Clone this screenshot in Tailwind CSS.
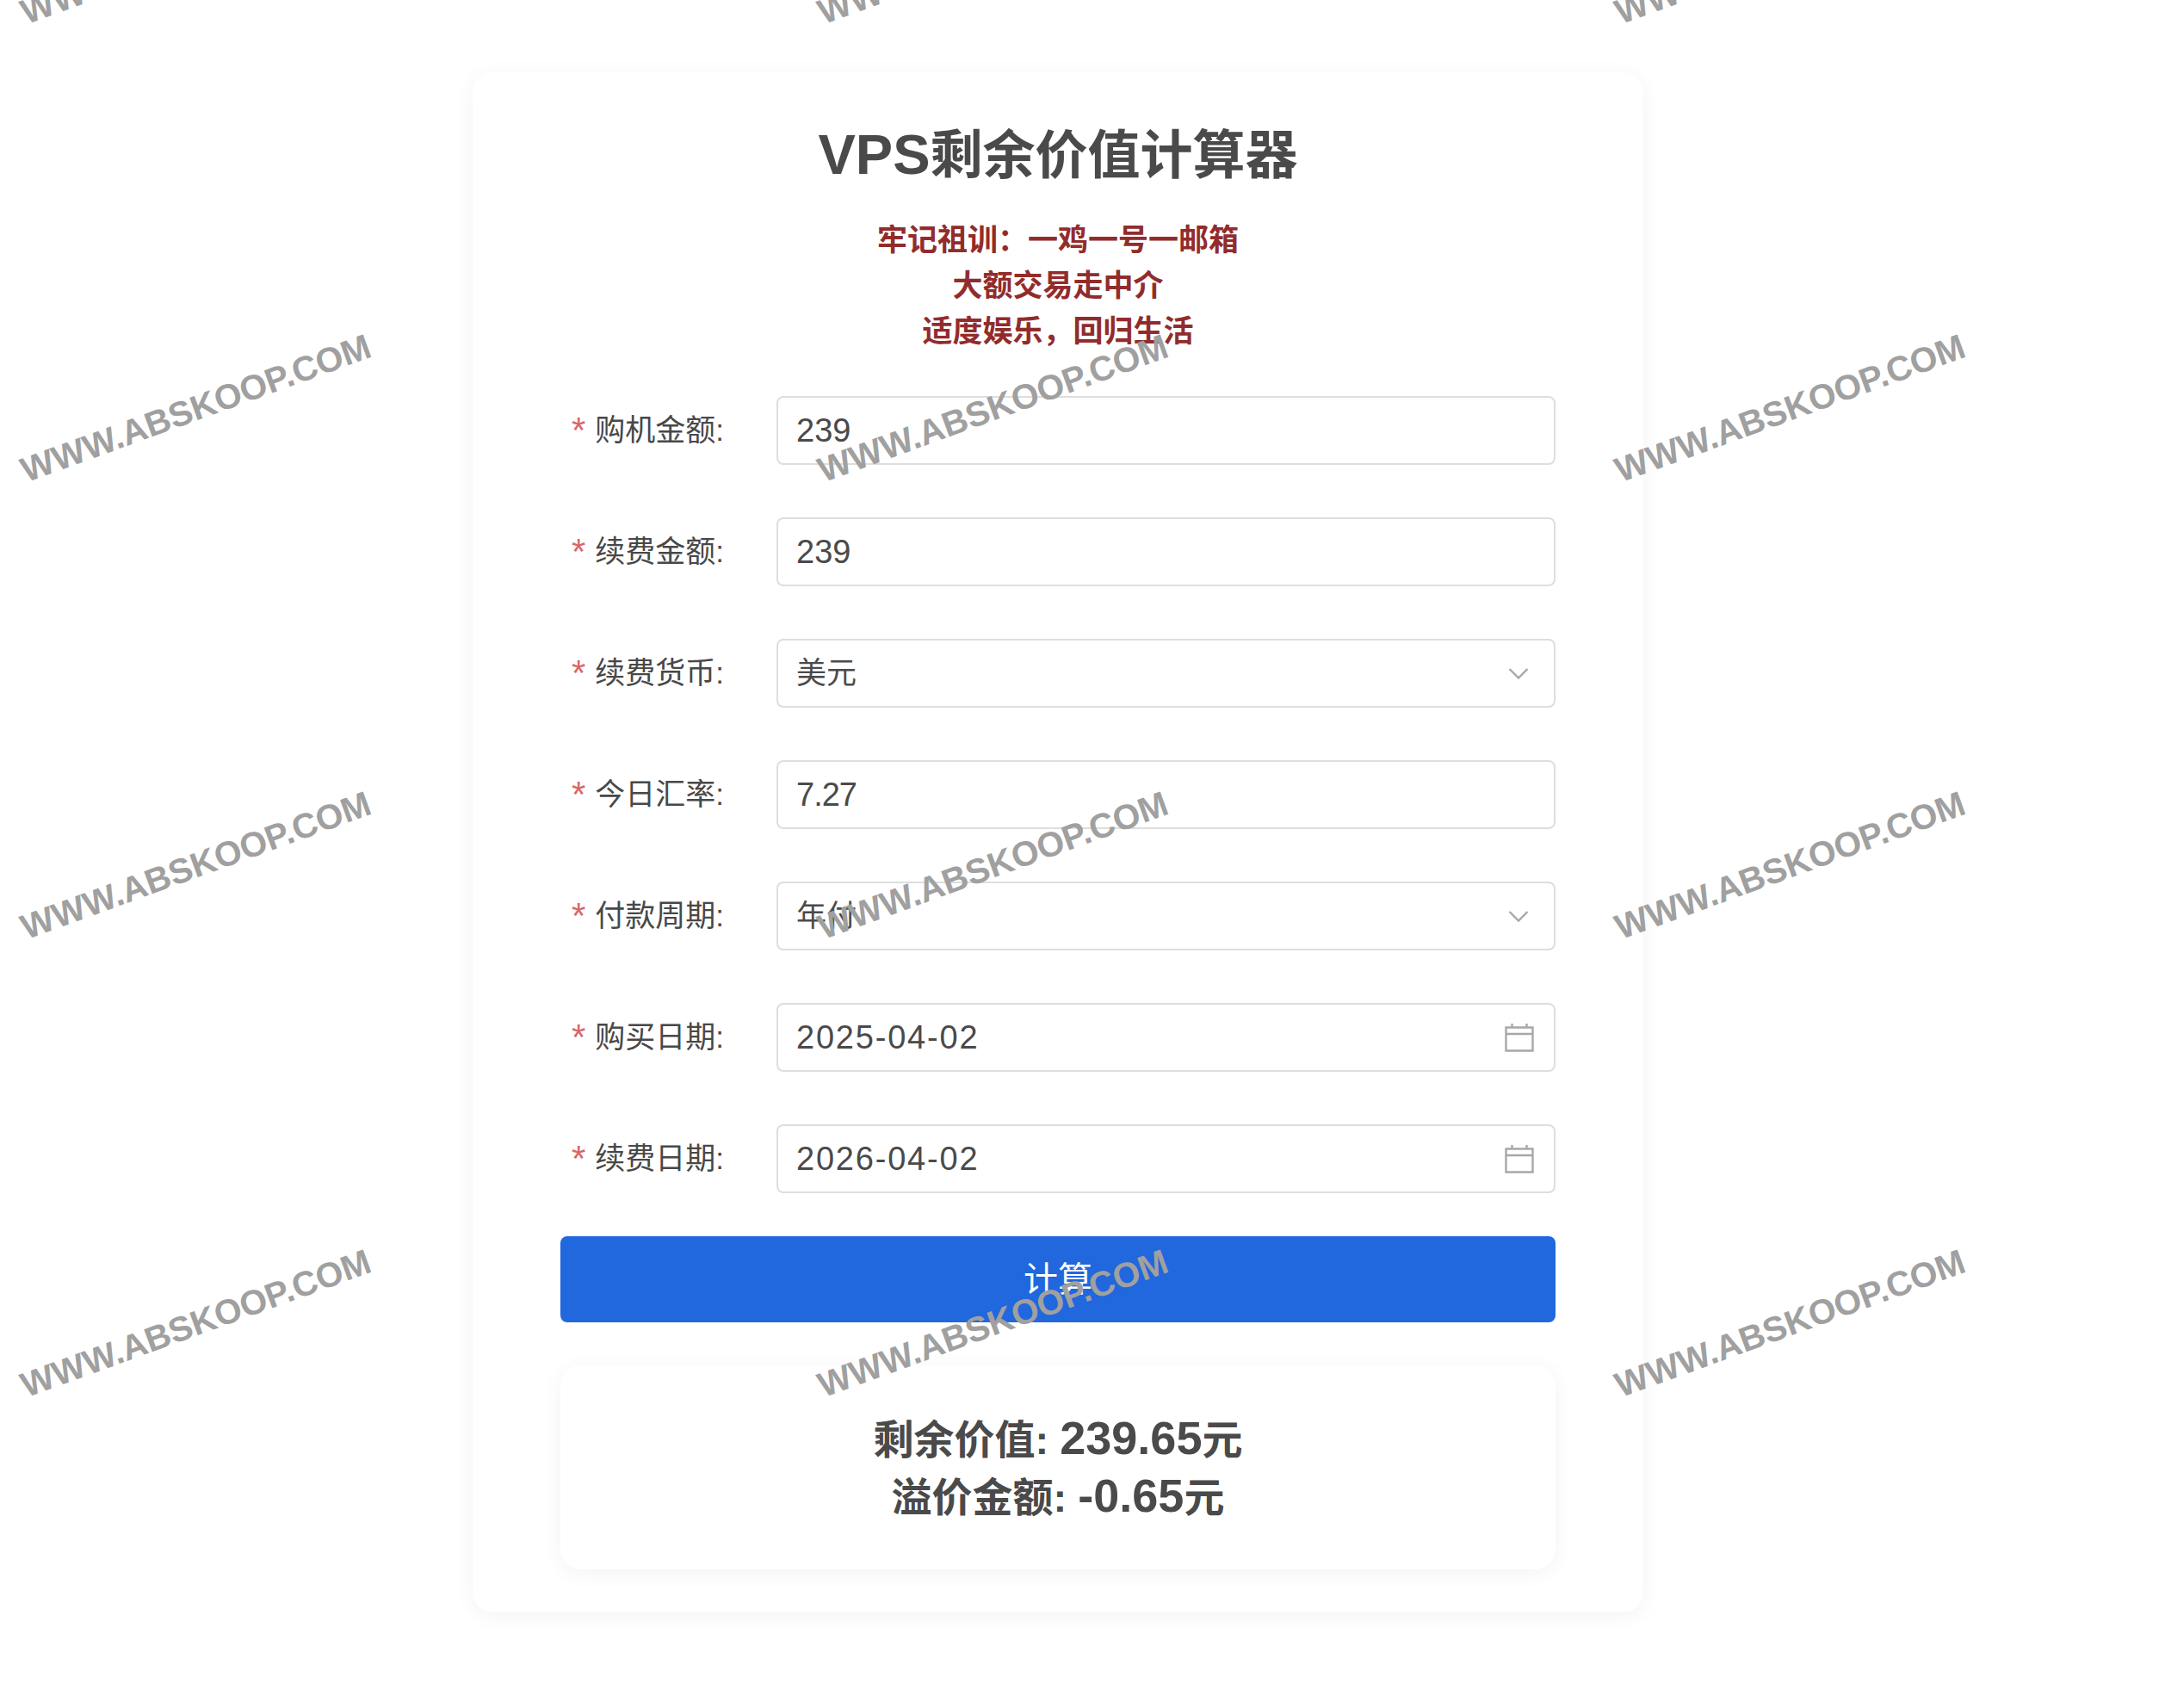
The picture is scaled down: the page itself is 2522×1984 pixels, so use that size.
<!DOCTYPE html>
<html lang="zh-CN">
<head>
    <meta charset="UTF-8">
    <meta name="viewport" content="width=device-width, initial-scale=1.0">
    <title>VPS剩余价值计算器</title>
    <script src="https://cdn.jsdelivr.net/npm/@tailwindcss/browser@4"></script>
</head>
<body class="relative h-[1984px] overflow-hidden bg-white font-['Liberation_Sans','Noto_Sans_CJK_SC',sans-serif] text-[#4a4a4a]">
    <!-- Card -->
    <main class="ml-[549px] mt-[84px] w-[1360px] rounded-[24px] bg-white pl-[102px] pr-[102px] pt-[62px] pb-[50px] shadow-[0_4px_24px_rgba(0,0,0,0.05)]">
        <h1 class="text-center text-[61px] font-bold leading-[68px]"><span class="text-[65px]">VPS</span>剩余价值计算器</h1>
        <div class="mt-[37px] text-center text-[35px] font-bold leading-[53px] text-[#922c2c]">
            <p>牢记祖训：一鸡一号一邮箱</p>
            <p>大额交易走中介</p>
            <p>适度娱乐，回归生活</p>
        </div>

        <!-- Form -->
        <form class="mt-[49px] flex flex-col gap-[61px]">
            <div class="flex items-center">
                <label class="flex w-[251px] shrink-0 items-center pl-[13px] text-[35px] text-[#484848]"><span class="mr-[11px] text-[42px] leading-none text-[#d9676a]">*</span>购机金额:</label>
                <div class="flex h-[80px] flex-1 items-center rounded-[8px] border-2 border-[#dedede] px-[21px] text-[38px]">239</div>
            </div>
            <div class="flex items-center">
                <label class="flex w-[251px] shrink-0 items-center pl-[13px] text-[35px] text-[#484848]"><span class="mr-[11px] text-[42px] leading-none text-[#d9676a]">*</span>续费金额:</label>
                <div class="flex h-[80px] flex-1 items-center rounded-[8px] border-2 border-[#dedede] px-[21px] text-[38px]">239</div>
            </div>
            <div class="flex items-center">
                <label class="flex w-[251px] shrink-0 items-center pl-[13px] text-[35px] text-[#484848]"><span class="mr-[11px] text-[42px] leading-none text-[#d9676a]">*</span>续费货币:</label>
                <div class="flex h-[80px] flex-1 items-center justify-between rounded-[8px] border-2 border-[#dedede] pl-[21px] pr-[29px] text-[35px]">
                    <span>美元</span>
                    <svg class="h-[16px] w-[24px] text-[#a8a8a8]" viewBox="0 0 24 16" fill="none" stroke="currentColor" stroke-width="2.4"><path d="M1.5 3L12 13.5L22.5 3"/></svg>
                </div>
            </div>
            <div class="flex items-center">
                <label class="flex w-[251px] shrink-0 items-center pl-[13px] text-[35px] text-[#484848]"><span class="mr-[11px] text-[42px] leading-none text-[#d9676a]">*</span>今日汇率:</label>
                <div class="flex h-[80px] flex-1 items-center rounded-[8px] border-2 border-[#dedede] px-[21px] text-[38px] tracking-[-1px]">7.27</div>
            </div>
            <div class="flex items-center">
                <label class="flex w-[251px] shrink-0 items-center pl-[13px] text-[35px] text-[#484848]"><span class="mr-[11px] text-[42px] leading-none text-[#d9676a]">*</span>付款周期:</label>
                <div class="flex h-[80px] flex-1 items-center justify-between rounded-[8px] border-2 border-[#dedede] pl-[21px] pr-[29px] text-[35px]">
                    <span>年付</span>
                    <svg class="h-[16px] w-[24px] text-[#a8a8a8]" viewBox="0 0 24 16" fill="none" stroke="currentColor" stroke-width="2.4"><path d="M1.5 3L12 13.5L22.5 3"/></svg>
                </div>
            </div>
            <div class="flex items-center">
                <label class="flex w-[251px] shrink-0 items-center pl-[13px] text-[35px] text-[#484848]"><span class="mr-[11px] text-[42px] leading-none text-[#d9676a]">*</span>购买日期:</label>
                <div class="flex h-[80px] flex-1 items-center justify-between rounded-[8px] border-2 border-[#dedede] pl-[21px] pr-[23px] text-[38px]">
                    <span class="tracking-[1.8px]">2025-04-02</span>
                    <svg class="h-[34px] w-[34px] text-[#a8a8a8]" viewBox="0 0 34 34" fill="none" stroke="currentColor" stroke-width="2.4"><path d="M1.5 5.5H32.5V32.5H1.5ZM1.5 13H32.5M8.5 1V5.5M25.5 1V5.5"/></svg>
                </div>
            </div>
            <div class="flex items-center">
                <label class="flex w-[251px] shrink-0 items-center pl-[13px] text-[35px] text-[#484848]"><span class="mr-[11px] text-[42px] leading-none text-[#d9676a]">*</span>续费日期:</label>
                <div class="flex h-[80px] flex-1 items-center justify-between rounded-[8px] border-2 border-[#dedede] pl-[21px] pr-[23px] text-[38px]">
                    <span class="tracking-[1.8px]">2026-04-02</span>
                    <svg class="h-[34px] w-[34px] text-[#a8a8a8]" viewBox="0 0 34 34" fill="none" stroke="currentColor" stroke-width="2.4"><path d="M1.5 5.5H32.5V32.5H1.5ZM1.5 13H32.5M8.5 1V5.5M25.5 1V5.5"/></svg>
                </div>
            </div>
        </form>

        <button class="mt-[50px] block h-[100px] w-full rounded-[8px] bg-[#2167dd] text-[40px] text-white">计算</button>

        <!-- Result -->
        <div class="mt-[50px] flex h-[237px] flex-col items-center justify-center rounded-[24px] bg-white text-[47px] font-bold leading-[64px] shadow-[0_4px_24px_rgba(0,0,0,0.05)]">
            <p>剩余价值: <span class="text-[54px]">239.65</span>元</p>
            <p>溢价金额: <span class="text-[54px]">-0.65</span>元</p>
        </div>
    </main>

    <!-- Watermark -->
    <div class="pointer-events-none absolute left-[-236px] top-[-323px] grid grid-cols-[repeat(3,926px)] auto-rows-[531.5px] place-items-center whitespace-nowrap text-[40.5px] font-bold text-[#a0a0a0]">
        <span class="-rotate-20">WWW.ABSKOOP.COM</span>
        <span class="-rotate-20">WWW.ABSKOOP.COM</span>
        <span class="-rotate-20">WWW.ABSKOOP.COM</span>
        <span class="-rotate-20">WWW.ABSKOOP.COM</span>
        <span class="-rotate-20">WWW.ABSKOOP.COM</span>
        <span class="-rotate-20">WWW.ABSKOOP.COM</span>
        <span class="-rotate-20">WWW.ABSKOOP.COM</span>
        <span class="-rotate-20">WWW.ABSKOOP.COM</span>
        <span class="-rotate-20">WWW.ABSKOOP.COM</span>
        <span class="-rotate-20">WWW.ABSKOOP.COM</span>
        <span class="-rotate-20">WWW.ABSKOOP.COM</span>
        <span class="-rotate-20">WWW.ABSKOOP.COM</span>
    </div>
</body>
</html>
